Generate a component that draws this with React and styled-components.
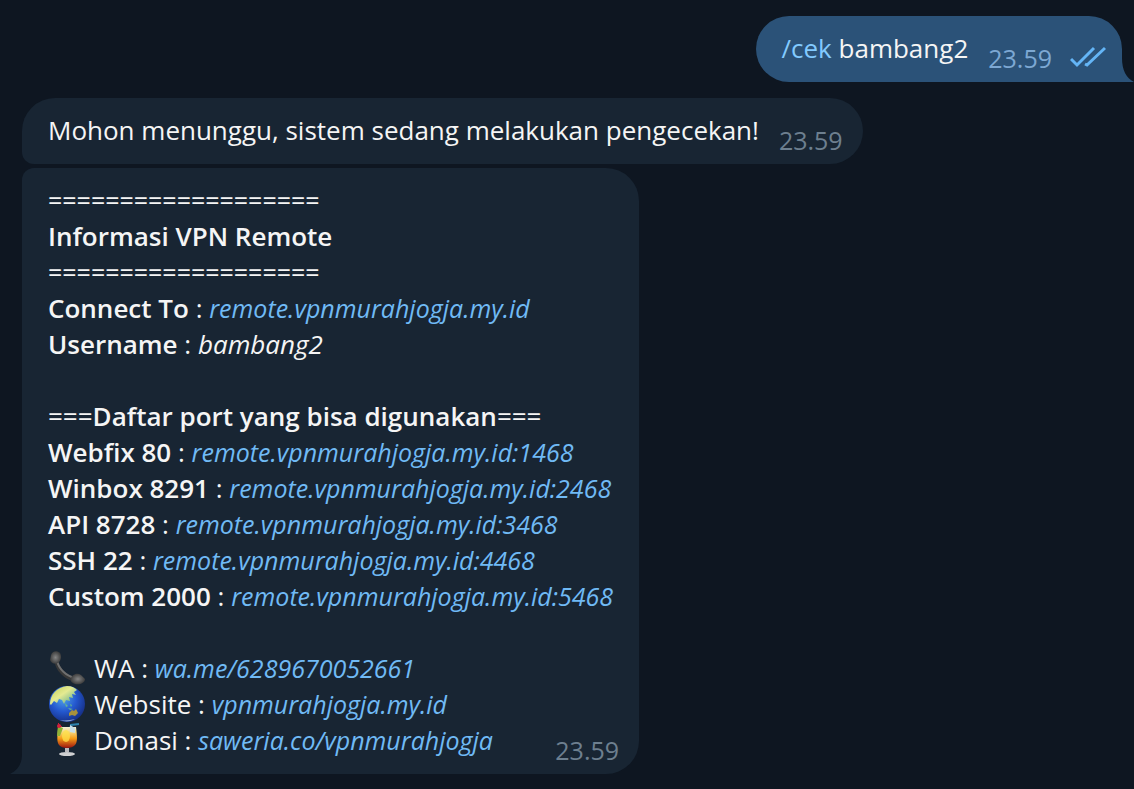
import React from "react";
import styled, { createGlobalStyle, css } from "styled-components";

const GlobalStyle = createGlobalStyle`
  *, *::before, *::after { box-sizing: border-box; }
  body {
    margin: 0;
    background: #0e1621;
    color: #f5f5f5;
    font-family: "Open Sans", "Noto Sans", sans-serif;
    font-size: 26px;
    line-height: 36px;
  }
`;

const Chat = styled.main`
  display: flex;
  flex-direction: column;
  min-height: 100vh;
  padding: 16px 12px 15px 22px;
`;

const Bubble = styled.article`
  position: relative;
  display: flex;
  max-width: 100%;
  padding: 14px 26px 16px;
  margin-top: ${(p) => p.$gap || 0}px;
  border-radius: ${(p) => p.$radius};
  ${(p) =>
    p.$out
      ? css`
          align-self: flex-end;
          background: #2b5278;
          --time: #7da8d3;
        `
      : css`
          align-self: flex-start;
          background: #182533;
          --time: #6d7f8f;
        `}
`;

const Text = styled.p`
  margin: 0;
`;

const Lines = styled.div`
  display: flex;
  flex-direction: column;
`;

const Line = styled.p`
  display: flex;
  margin: 0;
  min-height: 36px;
  white-space: pre;
`;

const Rule = styled(Line)`
  font-size: 25px;
`;

const Strong = styled.strong`
  font-weight: 600;
`;

const Link = styled.a`
  color: #70baf5;
  font-size: 25px;
  font-style: italic;
  text-decoration: none;
`;

const Command = styled.a`
  color: #82caff;
  text-decoration: none;
`;

const Meta = styled.div`
  display: flex;
  align-items: center;
  gap: 18px;
  color: var(--time);
  font-size: 25px;
  ${(p) =>
    p.$overlay
      ? css`
          position: absolute;
          right: 20px;
          bottom: 6px;
        `
      : css`
          margin: 10px -6px -10px 20px;
        `}
`;

const Ticks = styled.svg`
  width: 36px;
  height: 24px;
  margin-right: -4px;
`;

const Tail = styled.svg`
  position: absolute;
  bottom: 0;
  width: 12px;
  height: 24px;
  ${(p) => (p.$side === "right" ? "left: 100%;" : "right: 100%;")}
`;

const Emoji = styled.svg`
  width: 36px;
  height: 36px;
  margin: 0 9px 0 1px;
`;

const Phone = () => (
  <Emoji viewBox="0 0 36 36" role="img" aria-label="Telepon">
    <defs>
      <radialGradient id="ear">
        <stop offset="0" stopColor="#858585" />
        <stop offset="1" stopColor="#3d3d3d" />
      </radialGradient>
    </defs>
    <path d="M7 9C8 19 16 28 27 30" fill="none" stroke="#383838" strokeWidth="4" />
    <path d="M8 11C10 19 17 26 26 28" fill="none" stroke="#6f6f6f" strokeWidth="2" />
    <path d="M2 5C3 1 8 0 11 3C13 6 12 11 9 13C6 15 2 13 1 10Z" fill="url(#ear)" />
    <path d="M22 29C22 25 28 22 32 25L36 29C36 33 31 35 26 34C23 33 21 31 22 29Z" fill="url(#ear)" />
  </Emoji>
);

const Globe = () => (
  <Emoji viewBox="0 0 36 36" role="img" aria-label="Bola dunia">
    <defs>
      <radialGradient id="sea" cx="0.4" cy="0.35" r="0.65">
        <stop offset="0" stopColor="#4fa3e8" />
        <stop offset="0.55" stopColor="#2458cf" />
        <stop offset="1" stopColor="#17328c" />
      </radialGradient>
      <linearGradient id="land" x1="0" y1="0" x2="1" y2="1">
        <stop offset="0" stopColor="#c3d052" />
        <stop offset="0.45" stopColor="#e4ea92" />
        <stop offset="1" stopColor="#3fa08c" />
      </linearGradient>
    </defs>
    <circle cx="18" cy="18" r="18" fill="url(#sea)" />
    <path
      d="M1 18C1 9 8 1 18 0C23 0 26 2 28 4L25 6L27 9L23 8L24 12L20 11L21 15L17 14L15 18L13 14L10 13L8 17L5 15L2 19Z"
      fill="url(#land)"
    />
    <path d="M16 17L19 20L17 21ZM21 18L23 19L22 21ZM19 22L24 23L21 24Z" fill="#63b98f" />
    <path d="M20 27L23 24L25 25L27 23L29 27L26 30L23 29L20 30Z" fill="#a8913c" />
    <path d="M11 34C15 36 22 36 26 33C22 34 15 35 11 34Z" fill="#8fa5d0" />
  </Emoji>
);

const Drink = () => (
  <Emoji viewBox="0 0 36 36" role="img" aria-label="Minuman">
    <defs>
      <linearGradient id="juice" x1="0" y1="0" x2="0" y2="1">
        <stop offset="0" stopColor="#f4efd8" />
        <stop offset="0.25" stopColor="#f6d67a" />
        <stop offset="0.55" stopColor="#f59b17" />
        <stop offset="1" stopColor="#9c1410" />
      </linearGradient>
    </defs>
    <path d="M20 13L22 3L30 2" fill="none" stroke="#2d83ad" strokeWidth="2" />
    <path d="M9 5H27C28 13 29 20 26 23C23 27 13 27 10 23C7 19 9 11 9 5Z" fill="url(#juice)" />
    <path d="M9 4L14 6L11 14L8 14Z" fill="#8fb337" />
    <circle cx="10" cy="4" r="2" fill="#d81f3c" />
    <path d="M9 1L13 5" stroke="#c7233b" strokeWidth="1" />
    <path d="M21 3L26 6V11L21 10Z" fill="#c8dfe8" />
    <ellipse cx="17" cy="14" rx="4" ry="6" fill="#ffe14a" opacity="0.75" />
    <path d="M16 26H20V30H16Z" fill="#b9b9bd" />
    <ellipse cx="18" cy="32" rx="8" ry="2" fill="#cfd0d2" />
  </Emoji>
);

const host = "remote.vpnmurahjogja.my.id";

const ports = [
  { label: "Webfix 80", port: 1468 },
  { label: "Winbox 8291", port: 2468 },
  { label: "API 8728", port: 3468 },
  { label: "SSH 22", port: 4468 },
  { label: "Custom 2000", port: 5468 },
];

const contacts = [
  { Icon: Phone, label: "WA", url: "wa.me/6289670052661" },
  { Icon: Globe, label: "Website", url: "vpnmurahjogja.my.id" },
  { Icon: Drink, label: "Donasi", url: "saweria.co/vpnmurahjogja" },
];

export default function App() {
  return (
    <>
      <GlobalStyle />
      <Chat>
        <Bubble $out $radius="33px 33px 0 33px">
          <Text>
            <Command href="#cek">/cek</Command> bambang2
          </Text>
          <Meta>
            <time>23.59</time>
            <Ticks viewBox="0 0 36 24" role="img" aria-label="Dibaca">
              <path
                d="M1 13L7 19L24 2M15 18L17 19L35 2"
                fill="none"
                stroke="#64b5f6"
                strokeWidth="3"
              />
            </Ticks>
          </Meta>
          <Tail $side="right" viewBox="0 0 12 24" aria-hidden="true">
            <path d="M0 0C0 12 4 20 12 24H0Z" fill="#2b5278" />
          </Tail>
        </Bubble>

        <Bubble $gap={16} $radius="33px 33px 33px 12px">
          <Text>Mohon menunggu, sistem sedang melakukan pengecekan!</Text>
          <Meta>
            <time>23.59</time>
          </Meta>
        </Bubble>

        <Bubble $gap={4} $radius="12px 33px 33px 0">
          <Lines>
            <Rule>===================</Rule>
            <Line>
              <Strong>Informasi VPN Remote</Strong>
            </Line>
            <Rule>===================</Rule>
            <Line>
              <Strong>Connect To</Strong> : <Link href={`http://${host}`}>{host}</Link>
            </Line>
            <Line>
              <Strong>Username</Strong> : <em>bambang2</em>
            </Line>
            <Line />
            <Line>
              ===<Strong>Daftar port yang bisa digunakan</Strong>===
            </Line>
            {ports.map(({ label, port }) => (
              <Line key={port}>
                <Strong>{label}</Strong>
                {" : "}
                <Link href={`http://${host}:${port}`}>{`${host}:${port}`}</Link>
              </Line>
            ))}
            <Line />
            {contacts.map(({ Icon, label, url }) => (
              <Line key={label}>
                <Icon />
                {label} : <Link href={`https://${url}`}>{url}</Link>
              </Line>
            ))}
          </Lines>
          <Meta $overlay>
            <time>23.59</time>
          </Meta>
          <Tail $side="left" viewBox="0 0 12 24" aria-hidden="true">
            <path d="M12 4C12 14 8 20 0 24H12Z" fill="#182533" />
          </Tail>
        </Bubble>
      </Chat>
    </>
  );
}
